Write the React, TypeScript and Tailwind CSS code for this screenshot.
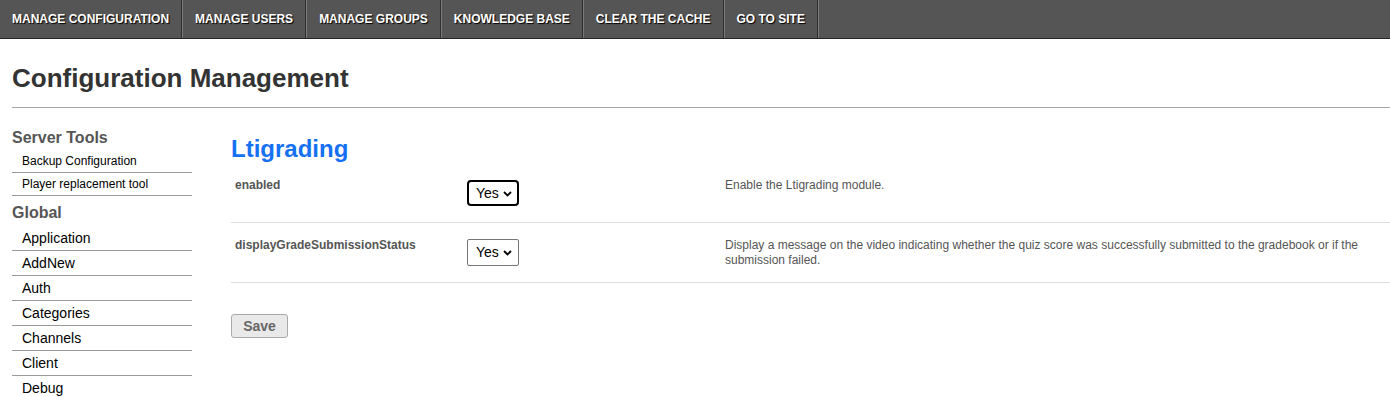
import React from 'react'

const navItems = ['Manage Configuration', 'Manage Users', 'Manage Groups', 'Knowledge Base', 'Clear the Cache', 'Go to Site']

const serverTools = ['Backup Configuration', 'Player replacement tool']
const globalItems = ['Application', 'AddNew', 'Auth', 'Categories', 'Channels', 'Client', 'Debug']

type Row = { name: string; focused?: boolean; description: string }

const rows: Row[] = [
  { name: 'enabled', focused: true, description: 'Enable the Ltigrading module.' },
  {
    name: 'displayGradeSubmissionStatus',
    description:
      'Display a message on the video indicating whether the quiz score was successfully submitted to the gradebook or if the submission failed.',
  },
]

const FakeSelect = ({ focused }: { focused?: boolean }) => (
  <div
    className={
      focused
        ? 'flex items-center justify-between w-[52px] h-[26px] pl-[7px] pr-[5px] border-2 border-black rounded-[4px] bg-white text-[14px] text-black'
        : 'flex items-center justify-between w-[52px] h-[27px] pl-[8px] pr-[6px] border border-[#767676] rounded-[2px] bg-white text-[14px] text-black'
    }
  >
    <span>Yes</span>
    <svg width="9" height="6" viewBox="0 0 9 6" className="mt-[1px]">
      <path d="M1 1l3.5 3.5L8 1" fill="none" stroke="#000" strokeWidth="1.8" />
    </svg>
  </div>
)

export default function App() {
  return (
    <div className="min-h-screen bg-white font-['Liberation_Sans',Arial,sans-serif]">
      <nav className="flex h-[39px] bg-[#555555] border-b border-[#262626]">
        {navItems.map((item) => (
          <a
            key={item}
            href="#"
            className="flex items-center h-[38px] px-[12px] mr-px border-r border-[#2f2f2f] shadow-[1px_0_0_#7a7a7a] text-[12px] font-bold uppercase text-white [text-shadow:1px_1px_1px_#000]"
          >
            {item}
          </a>
        ))}
      </nav>

      <div className="pl-[12px]">
        <h1 className="mt-[24px] text-[26px] leading-[30px] font-bold text-[#333333]">Configuration Management</h1>
        <hr className="mt-[14px] border-0 border-t border-[#a6a6a6]" />

        <div className="flex">
          <aside className="w-[180px] shrink-0">
            <h3 className="mt-[17px] h-[25px] leading-[25px] text-[16px] font-bold text-[#555555]">Server Tools</h3>
            {serverTools.map((t) => (
              <div key={t} className="h-[23px] pl-[10px] flex items-center border-b border-[#999999] text-[12px] text-black">
                {t}
              </div>
            ))}
            <h3 className="h-[30px] pt-[4px] leading-[26px] text-[16px] font-bold text-[#555555]">Global</h3>
            {globalItems.map((t, i) => (
              <div
                key={t}
                className={
                  i < globalItems.length - 1
                    ? 'h-[25px] pl-[10px] flex items-center border-b border-[#999999] text-[14px] text-black'
                    : 'h-[25px] pl-[10px] flex items-center text-[14px] text-black'
                }
              >
                {t}
              </div>
            ))}
          </aside>

          <main className="ml-[39px] flex-1">
            <h2 className="mt-[27px] text-[24px] leading-[28px] font-bold text-[#1671f2]">Ltigrading</h2>
            <div>
              {rows.map((r) => (
                <div key={r.name} className="flex h-[60px] border-b border-[#dddddd] pt-[15px]">
                  <div className="w-[232px] pl-[4px] text-[12px] leading-[14px] font-bold text-[#555555]">{r.name}</div>
                  <div className={r.focused ? 'w-[258px] pl-[4px] mt-[2px]' : 'w-[258px] pl-[4px] mt-[1px]'}>
                    <FakeSelect focused={r.focused} />
                  </div>
                  <div className="flex-1 pl-[4px] pr-[4px] text-[12px] leading-[15px] text-[#555555]">{r.description}</div>
                </div>
              ))}
            </div>
            <button className="mt-[31px] w-[57px] h-[24px] border border-[#aaaaaa] rounded-[3px] bg-[#e9e9e9] text-[14px] font-bold text-[#666666]">
              Save
            </button>
          </main>
        </div>
      </div>
    </div>
  )
}
